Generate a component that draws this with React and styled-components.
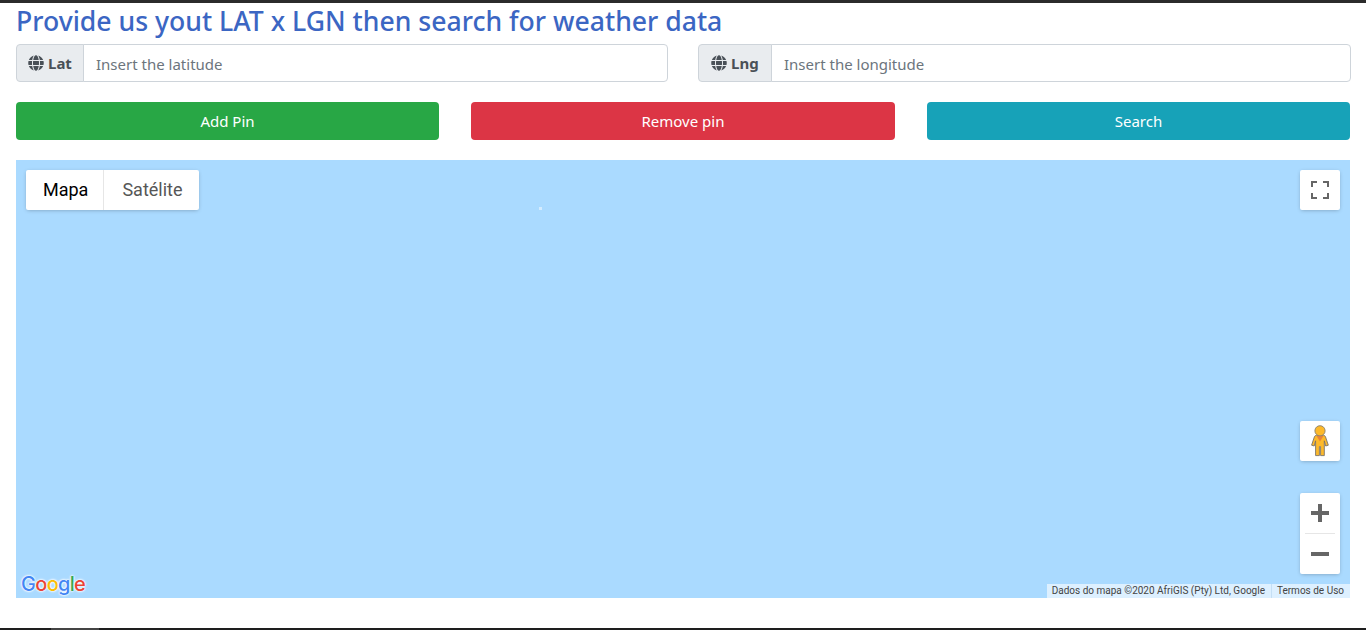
import React from 'react';
import styled, { createGlobalStyle } from 'styled-components';
import { FaGlobe } from 'react-icons/fa';

const GlobalStyle = createGlobalStyle`
    html, body {
        margin: 0;
        padding: 0;
        height: 630px;
        overflow: hidden;
        background: #fff;
    }
    * {
        box-sizing: border-box;
    }
`;

const Page = styled.div`
    height: 630px;
    border-top: 3px solid #2b2b2b;
    font-family: "Noto Sans", "Open Sans", sans-serif;
    color: #212529;
`;
const Content = styled.div`
    height: 625px;
    padding: 0 16px;
`;
const BottomBar = styled.div`
    height: 2px;
    background: linear-gradient(to right, #1e1e1e 51px, #444 51px, #444 99px, #1e1e1e 99px);
`;
const Title = styled.h1`
    margin: 0;
    height: 41px;
    font-size: 26.6px;
    line-height: 37px;
    font-weight: 500;
    color: #3b66c3;
`;
const InputRow = styled.div`
    display: grid;
    grid-template-columns: 652px 653px;
    column-gap: 30px;
`;
const InputGroup = styled.div`
    display: flex;
    height: 38px;
`;
const Addon = styled.div`
    flex: none;
    width: ${(p) => p.$width}px;
    display: flex;
    align-items: center;
    gap: 4px;
    padding-left: ${(p) => p.$pad}px;
    background: #e9ecef;
    border: 1px solid #ced4da;
    border-radius: 4px 0 0 4px;
    font-size: 15px;
    font-weight: 700;
    color: #495057;
    svg {
        font-size: 16px;
    }
`;
const Field = styled.input`
    flex: 1;
    min-width: 0;
    margin-left: -1px;
    padding: 2px 12px 0;
    border: 1px solid #ced4da;
    border-radius: 0 4px 4px 0;
    font-family: inherit;
    font-size: 15px;
    outline: none;
    &::placeholder {
        color: #6c757d;
        opacity: 1;
    }
`;
const ButtonRow = styled.div`
    display: grid;
    grid-template-columns: 423px 424px 423px;
    column-gap: 32px;
    margin-top: 20px;
`;
const Button = styled.button`
    height: 38px;
    border: 0;
    border-radius: 4px;
    background: ${(p) => p.$bg};
    color: #fff;
    font-family: inherit;
    font-size: 15px;
`;
const MapArea = styled.div`
    position: relative;
    height: 438px;
    width: 1334px;
    margin-top: 20px;
    background: #aadaff;
    font-family: Roboto, Arial, sans-serif;
`;
const MapType = styled.div`
    position: absolute;
    top: 10px;
    left: 10px;
    display: flex;
    height: 40px;
    background: #fff;
    border-radius: 2px;
    box-shadow: rgba(0, 0, 0, 0.3) 0 1px 4px -1px;
`;
const MapTypeButton = styled.div`
    display: flex;
    align-items: center;
    padding: ${(p) => (p.$active ? '0 15px 1px 17px' : '0 16px 1px 18px')};
    font-size: 18px;
    color: ${(p) => (p.$active ? '#000' : '#565656')};
    border-right: ${(p) => (p.$active ? '1px solid #e6e6e6' : '0')};
`;
const Control = styled.div`
    position: absolute;
    right: 10px;
    top: ${(p) => p.$top}px;
    width: 40px;
    height: 40px;
    display: flex;
    align-items: center;
    justify-content: center;
    background: #fff;
    border-radius: 2px;
    box-shadow: rgba(0, 0, 0, 0.3) 0 1px 4px -1px;
`;
const ZoomBox = styled.div`
    position: absolute;
    right: 10px;
    top: 333px;
    width: 40px;
    height: 81px;
    display: flex;
    flex-direction: column;
    background: #fff;
    border-radius: 2px;
    box-shadow: rgba(0, 0, 0, 0.3) 0 1px 4px -1px;
`;
const ZoomButton = styled.div`
    height: 40px;
    display: flex;
    align-items: center;
    justify-content: center;
`;
const ZoomDivider = styled.div`
    height: 1px;
    margin: 0 5px;
    background: #e6e6e6;
`;
const Speck = styled.div`
    position: absolute;
    top: 47px;
    left: 523px;
    width: 3px;
    height: 3px;
    background: #d4ecff;
`;
const GoogleLogo = styled.div`
    position: absolute;
    left: 5px;
    bottom: 2px;
    font-family: Inter, Roboto, sans-serif;
    font-size: 20px;
    line-height: 24px;
    font-weight: 500;
    letter-spacing: -0.7px;
    text-shadow: 0 0 2px #fff, 0 0 2px #fff, 0 0 3px #fff;
`;
const Letter = styled.span`
    color: ${(p) => p.$color};
`;
const Attribution = styled.div`
    position: absolute;
    right: 0;
    bottom: 0;
    height: 14px;
    display: flex;
    align-items: center;
    background: rgba(255, 255, 255, 0.6);
    font-size: 10px;
    color: #444;
`;
const AttributionItem = styled.span`
    padding: 0 6px 0 5px;
    line-height: 14px;
    white-space: nowrap;
    & + & {
        border-left: 1px solid #c4dff5;
    }
`;

const FullscreenIcon = () => (
    <svg width="18" height="18" viewBox="0 0 18 18" fill="#666">
        <path d="M0 0h6v2H2v4H0zM12 0h6v6h-2V2h-4zM0 12h2v4h4v2H0zM16 12h2v6h-6v-2h4z" />
    </svg>
);

const Pegman = () => (
    <svg width="18" height="32" viewBox="0 0 18 32">
        <path
            d="M5.4 10.4h7.2c.9 0 1.6.5 1.9 1.4l2.8 8.4-2.6.8-1.4-5.2v14.8H9.6v-9H8.4v9H4.6V15.8L3.2 21 .6 20.2l2.8-8.4c.3-.9 1-1.4 2-1.4z"
            fill="#fdb92a"
            stroke="#7b7368"
            strokeWidth="0.9"
        />
        <path d="M5.4 10.8h7.2L9 16.4z" fill="#e8833a" />
        <circle cx="9" cy="5.8" r="5.1" fill="#fdb92a" stroke="#8a8170" strokeWidth="0.9" />
    </svg>
);

const PlusIcon = () => (
    <svg width="18" height="18" viewBox="0 0 18 18" fill="#666">
        <path d="M7 0h4v7h7v4h-7v7H7v-7H0V7h7z" />
    </svg>
);

const MinusIcon = () => (
    <svg width="18" height="4" viewBox="0 0 18 4" fill="#666">
        <rect width="18" height="4" />
    </svg>
);

const App = () => {
    return (
        <>
            <GlobalStyle />
            <Page>
                <Content>
                    <Title>Provide us yout LAT x LGN then search for weather data</Title>
                    <InputRow>
                        <InputGroup>
                            <Addon $width={68} $pad={11}><FaGlobe /> Lat</Addon>
                            <Field placeholder="Insert the latitude" />
                        </InputGroup>
                        <InputGroup>
                            <Addon $width={74} $pad={12}><FaGlobe /> Lng</Addon>
                            <Field placeholder="Insert the longitude" />
                        </InputGroup>
                    </InputRow>
                    <ButtonRow>
                        <Button $bg="#28a745">Add Pin</Button>
                        <Button $bg="#dc3545">Remove pin</Button>
                        <Button $bg="#17a2b8">Search</Button>
                    </ButtonRow>
                    <MapArea>
                        <Speck />
                        <MapType>
                            <MapTypeButton $active>Mapa</MapTypeButton>
                            <MapTypeButton>Satélite</MapTypeButton>
                        </MapType>
                        <Control $top={10}><FullscreenIcon /></Control>
                        <Control $top={261}><Pegman /></Control>
                        <ZoomBox>
                            <ZoomButton><PlusIcon /></ZoomButton>
                            <ZoomDivider />
                            <ZoomButton><MinusIcon /></ZoomButton>
                        </ZoomBox>
                        <GoogleLogo>
                            <Letter $color="#4285f4">G</Letter>
                            <Letter $color="#ea4335">o</Letter>
                            <Letter $color="#fbbc05">o</Letter>
                            <Letter $color="#4285f4">g</Letter>
                            <Letter $color="#34a853">l</Letter>
                            <Letter $color="#ea4335">e</Letter>
                        </GoogleLogo>
                        <Attribution>
                            <AttributionItem>Dados do mapa ©2020 AfriGIS (Pty) Ltd, Google</AttributionItem>
                            <AttributionItem>Termos de Uso</AttributionItem>
                        </Attribution>
                    </MapArea>
                </Content>
                <BottomBar />
            </Page>
        </>
    );
};

export default App;
